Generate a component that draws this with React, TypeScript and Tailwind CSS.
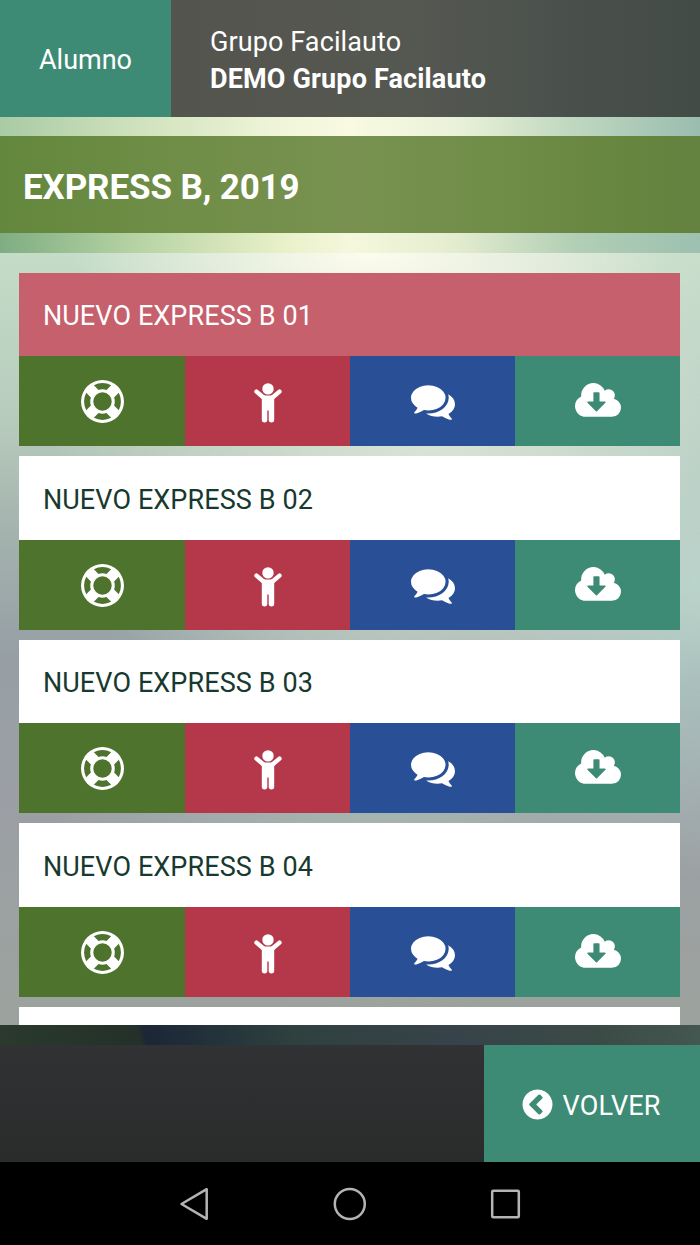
import React from 'react';

const PATHS = {
  lifeRing:
    'M896 0q182 0 348 71t286 191 191 286 71 348-71 348-191 286-286 191-348 71-348-71-286-191-191-286-71-348 71-348 191-286 286-191 348-71zm0 128q-190 0-361 90l194 194q82-28 167-28t167 28l194-194q-171-90-361-90zm-678 1129l194-194q-28-82-28-167t28-167l-194-194q-90 171-90 361t90 361zm678 407q190 0 361-90l-194-194q-82 28-167 28t-167-28l-194 194q171 90 361 90zm0-384q159 0 271.5-112.5t112.5-271.5-112.5-271.5-271.5-112.5-271.5 112.5-112.5 271.5 112.5 271.5 271.5 112.5zm484-217l194 194q90-171 90-361t-90-361l-194 194q28 82 28 167t-28 167z',
  comments:
    'M1408 768q0 139-94 257t-256.5 186.5-353.5 68.5q-86 0-176-16-124 88-278 128-36 9-86 16h-3q-11 0-20.5-8t-11.5-21q-1-3-1-6.5t.5-6.5 2-6l2.5-5 3.5-5.5 4-5 4.5-5 4-4.5q5-6 23-25t26-29.5 22.5-29 25-38.5 20.5-44q-124-72-195-177t-71-224q0-139 94-257t256.5-186.5 353.5-68.5 353.5 68.5 256.5 186.5 94 257zm384 256q0 120-71 224.5t-195 176.5q10 24 20.5 44t25 38.5 22.5 29 26 29.5 23 25q1 1 4 4.5t4.5 5 4 5 3.5 5.5l2.5 5 2 6 .5 6.5-1 6.5q-3 14-13 22t-22 7q-50-7-86-16-154-40-278-128-90 16-176 16-271 0-472-132 58 4 88 4 161 0 309-45t264-129q125-92 192-212t67-254q0-77-23-152 129 71 204 178t75 230z',
  cloud:
    'M1280 928q0-14-9-23t-23-9h-224v-352q0-13-9.5-22.5t-22.5-9.5h-192q-13 0-22.5 9.5t-9.5 22.5v352h-224q-13 0-22.5 9.5t-9.5 22.5q0 14 9 23l352 352q9 9 23 9t23-9l351-351q10-12 10-24zm640 224q0 159-112.5 271.5t-271.5 112.5h-1088q-185 0-316.5-131.5t-131.5-316.5q0-130 70-240t188-165q-2-30-2-43 0-212 150-362t362-150q156 0 285.5 87t188.5 231q71-62 166-62 106 0 181 75t75 181q0 76-41 138 130 31 213.5 135.5t83.5 238.5z',
  back:
    'M1037 1395l102-102q19-19 19-45t-19-45l-307-307 307-307q19-19 19-45t-19-45l-102-102q-19-19-45-19t-45 19l-454 454q-19 19-19 45t19 45l454 454q19 19 45 19t45-19zm627-499q0 209-103 385.5t-279.5 279.5-385.5 103-385.5-103-279.5-279.5-103-385.5 103-385.5 279.5-279.5 385.5-103 385.5 103 279.5 279.5 103 385.5z',
};

interface IconProps {
  name: keyof typeof PATHS;
  className?: string;
  width?: number;
}

const Icon: React.FC<IconProps> = ({ name, className, width = 1792 }) => (
  <svg viewBox={`0 0 ${width} 1792`} fill="currentColor" className={className}>
    <path d={PATHS[name]} />
  </svg>
);

const ChildIcon: React.FC = () => (
  <svg viewBox="0 0 28 40" fill="currentColor" className="h-10 w-7">
    <circle cx="14" cy="5.9" r="5.7" />
    <path d="M2.5 8.6 9.8 14.8M25.5 8.6 18.2 14.8" stroke="currentColor" strokeWidth="4.4" strokeLinecap="round" />
    <path d="M7.8 12.4H20.2V36.8a2.7 2.7 0 0 1-5.5 0V27.5H13.3V36.8a2.7 2.7 0 0 1-5.5 0Z" />
  </svg>
);

const tests = [
  { title: 'NUEVO EXPRESS B 01', active: true },
  { title: 'NUEVO EXPRESS B 02', active: false },
  { title: 'NUEVO EXPRESS B 03', active: false },
  { title: 'NUEVO EXPRESS B 04', active: false },
];

const TestCard: React.FC<{ title: string; active: boolean }> = ({ title, active }) => (
  <div className="mb-[10px] h-[173.5px] shrink-0 text-white">
    <div
      className={`flex h-[83.5px] items-center pl-[23.5px] pt-[4px] text-[27px] ${
        active ? 'bg-[#c6606d]' : 'bg-white text-[#17392f]'
      }`}
    >
      <span className="tracking-[0.1px]">{title}</span>
    </div>
    <div className="grid h-[90px] grid-cols-4">
      <button className="flex items-center justify-center bg-[#4d732d] pl-px pt-px">
        <Icon name="lifeRing" className="h-[43px] w-[43px]" />
      </button>
      <button className="flex items-center justify-center bg-[#b43849] pl-px pt-[4px]">
        <ChildIcon />
      </button>
      <button className="flex items-center justify-center bg-[#294f96] pl-px">
        <Icon name="comments" className="h-[44px] w-[44px]" />
      </button>
      <button className="flex items-center justify-center bg-[#3e8b75] pt-px">
        <Icon name="cloud" width={1920} className="h-[43px] w-[46px]" />
      </button>
    </div>
  </div>
);

const App: React.FC = () => {
  return (
    <div className="flex h-[1245px] w-[700px] flex-col overflow-hidden bg-black font-['Roboto',sans-serif] text-white">
      <header className="flex h-[116.6px] shrink-0 bg-[linear-gradient(90deg,#50524d_0%,#555650_40%,#555751_60%,#4a514c_80%,#434b47_100%)]">
        <div className="flex w-[171px] items-center justify-center bg-[#3e8b75] pt-[4px] text-[27px]">Alumno</div>
        <div className="flex flex-col justify-center pl-[39px] pt-[5px] text-[27px] leading-[37px]">
          <span className="tracking-[0.1px]">Grupo Facilauto</span>
          <span className="font-bold tracking-[0.15px]">DEMO Grupo Facilauto</span>
        </div>
      </header>

      <div className="h-[19.4px] shrink-0 bg-[linear-gradient(90deg,#a8cba5_0%,#d0e2bd_20%,#f0f5d9_40%,#f8fae1_50%,#eaf2d9_65%,#bfd7bf_82%,#9abdb0_100%)]" />
      <div className="flex h-[97.5px] shrink-0 items-center bg-[linear-gradient(90deg,#63873d_0%,#718e48_28%,#789150_50%,#718e49_70%,#66853f_90%,#648240_100%)] pl-[23px] pt-[8px] text-[35px] font-bold tracking-[-0.12px]">
        EXPRESS B, 2019
      </div>
      <div className="h-[19.1px] shrink-0 bg-[linear-gradient(90deg,#7fad82_0%,#b8d4a4_20%,#e8f0c8_40%,#f5f8dc_50%,#e4eccf_65%,#b2cfb5_82%,#9dc0b0_100%)]" />

      <main className="flex h-[772.6px] shrink-0 flex-col overflow-hidden bg-[radial-gradient(ellipse_300px_110px_at_370px_0px,#fdfcee_0%,#fdfcee00_100%),radial-gradient(ellipse_380px_380px_at_430px_150px,#dce7d8_0%,#dce7d800_100%),radial-gradient(ellipse_240px_300px_at_700px_330px,#b4d0c8_0%,#b4d0c800_100%),radial-gradient(ellipse_330px_260px_at_380px_500px,#a9bab3_0%,#a9bab300_100%),linear-gradient(180deg,#c4dcc8_0%,#b7cbbc_22%,#a4b3ae_36%,#969fa5_52%,#9b9fa5_70%,#9ca29d_100%)] pl-[19.4px] pr-[19.8px] pt-[20px]">
        {tests.map((t) => (
          <TestCard key={t.title} {...t} />
        ))}
        <div className="h-[84px] shrink-0 bg-white" />
      </main>

      <div className="h-5 shrink-0 bg-[linear-gradient(75deg,#2a3a2c_0%,#243029_20%,#1c2636_21%,#22303a_29%,#30403f_42%,#37434a_65%,#3c4a46_85%,#445750_100%)]" />
      <footer className="flex h-[116.8px] shrink-0 justify-end bg-[linear-gradient(180deg,#303233_0%,#2a2b2b_100%)]">
        <button className="flex w-[216px] items-center bg-[#3e8b75] pl-9 pt-px text-[27px]">
          <Icon name="back" className="h-[35px] w-[35px]" />
          <span className="ml-[7.5px] pt-[4px] tracking-[0.2px]">VOLVER</span>
        </button>
      </footer>

      <nav className="flex flex-1 items-center justify-center bg-black pt-px text-[#b4b4b4]">
        <svg viewBox="0 0 360 40" className="h-10 w-[360px]" fill="none" stroke="currentColor" strokeWidth="2.5" strokeLinejoin="round">
          <path d="M11.5 20 36.7 5.2v29.6z" />
          <circle cx="179.8" cy="20" r="15" />
          <rect x="322.2" y="6.7" width="26.6" height="26.6" rx="1" />
        </svg>
      </nav>
    </div>
  );
};

export default App;
